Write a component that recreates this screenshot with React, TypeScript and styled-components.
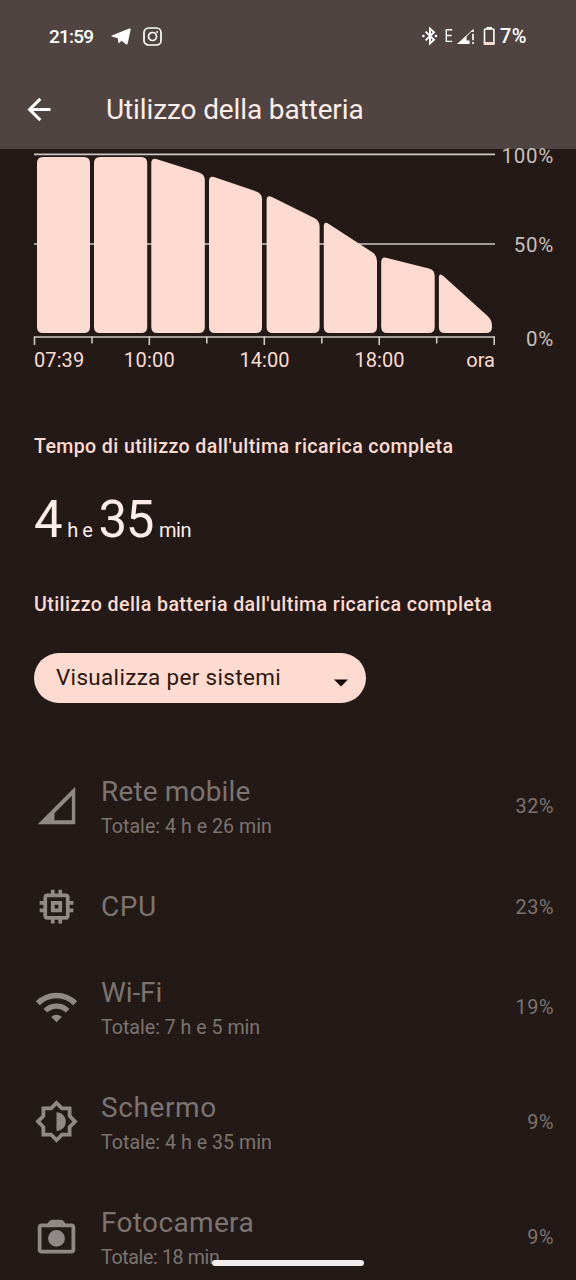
import React from "react";
import styled, { createGlobalStyle } from "styled-components";

const c = {
  bg: "#231a18",
  header: "#504442",
  peach: "#fedbd0",
  ink: "#2c1610",
  text: "#fdeeea",
  line: "#cdc6c3",
  scale: "#c9bfbc",
  dim: "#7d7370",
  dimIcon: "#918987",
};

const GlobalStyle = createGlobalStyle`
  * { box-sizing: border-box; }
  body { margin: 0; background: ${c.bg}; }
`;

const Screen = styled.div`
  position: relative;
  width: 576px;
  height: 1280px;
  overflow: hidden;
  background: ${c.bg};
  color: ${c.text};
  font-family: Roboto, "Open Sans", sans-serif;
  display: flex;
  flex-direction: column;
  white-space: nowrap;
`;

const Header = styled.header`
  height: 149px;
  flex: none;
  background: ${c.header};
`;

const StatusBar = styled.div`
  height: 72px;
  padding: 0 49px 0 49px;
  display: flex;
  align-items: center;
  justify-content: space-between;
  color: #fff;
  font-size: 19px;
  font-weight: 500;
`;

const StatusGroup = styled.div`
  display: flex;
  align-items: center;
`;

const Clock = styled.span`
  width: 62px;
  letter-spacing: -0.8px;
`;

const TelegramIcon = styled.svg`
  width: 20px;
  height: 17px;
`;

const InstagramIcon = styled.svg`
  width: 19px;
  height: 19px;
  margin-left: 12px;
`;

const SystemIcons = styled.svg`
  width: 78px;
  height: 22px;
`;

const BatteryLevel = styled.span`
  width: 27px;
  font-size: 20px;
  letter-spacing: 0.5px;
`;

const AppBar = styled.div`
  height: 77px;
  padding-left: 23px;
  display: flex;
  align-items: center;
  gap: 50px;
`;

const Title = styled.h1`
  margin: 0;
  padding-bottom: 2px;
  font-size: 28px;
  line-height: 36px;
  font-weight: 400;
  letter-spacing: -0.12px;
`;

const BackIcon = styled.svg`
  width: 33px;
  height: 33px;
  margin-bottom: 2px;
`;

const ChartSection = styled.section`
  height: 231px;
  flex: none;
  display: flex;
`;

const ChartColumn = styled.div`
  width: 496px;
`;

const Plot = styled.svg`
  display: block;
  width: 496px;
  height: 198px;
`;

const TimeAxis = styled.div`
  display: grid;
  grid-template-columns: 58px 115px 115px 115px 58px;
  margin-left: 34px;
  font-size: 20px;
  line-height: 26px;
  color: ${c.peach};
`;

const Tick = styled.span<{ $align?: string; $ls?: number }>`
  text-align: ${(p) => p.$align ?? "center"};
  letter-spacing: ${(p) => p.$ls ?? 0}px;
`;

const Scale = styled.div`
  width: 58px;
  margin-top: -6px;
  display: grid;
  grid-template-rows: 89px 94px 26px;
  justify-items: end;
  font-size: 20.5px;
  line-height: 26px;
  letter-spacing: 0.7px;
  color: ${c.scale};
`;

const Heading = styled.h2<{ $ls?: number }>`
  margin: 0;
  padding-left: 34px;
  font-size: 19.6px;
  line-height: 28px;
  font-weight: 500;
  color: ${c.peach};
  letter-spacing: ${(p) => p.$ls ?? 0}px;
`;

const Summary = styled.section`
  padding-top: 53px;
  flex: none;
  height: 368px;
`;

const Duration = styled.div`
  height: 130px;
  padding: 27px 0 0 34px;
  line-height: 64px;
  display: flex;
  align-items: baseline;
`;

const Big = styled.span`
  font-size: 51px;
  letter-spacing: -1.5px;
`;

const Unit = styled.span`
  font-size: 20px;
  letter-spacing: -0.4px;
  margin: 0 6px 0 6px;
`;

const Select = styled.button`
  margin: 34px 0 0 34px;
  width: 332px;
  height: 50px;
  padding: 0 17px 2px 22px;
  border: 0;
  border-radius: 25px;
  background: ${c.peach};
  color: ${c.ink};
  display: flex;
  align-items: center;
  justify-content: space-between;
  font-family: inherit;
  font-size: 22.4px;
  letter-spacing: 0.36px;
`;

const Caret = styled.svg`
  width: 16px;
  height: 8px;
  margin-top: 11px;
`;

const Row = styled.div<{ $compact?: boolean }>`
  height: ${(p) => (p.$compact ? 86 : 115)}px;
  flex: none;
  padding: 0 22px 0 34px;
  display: flex;
  align-items: center;
  color: ${c.dim};
`;

const RowIcon = styled.svg`
  width: 45px;
  height: 45px;
  margin-right: 22px;
  color: ${c.dimIcon};
`;

const RowText = styled.div<{ $compact?: boolean }>`
  flex: 1;
  padding-top: ${(p) => (p.$compact ? 0 : 5)}px;
`;

const RowName = styled.div<{ $ls?: number }>`
  font-size: 28px;
  line-height: 37px;
  letter-spacing: ${(p) => p.$ls ?? 0}px;
`;

const RowDetail = styled.div<{ $ls?: number }>`
  font-size: 19.6px;
  line-height: 33px;
  letter-spacing: ${(p) => p.$ls ?? 0}px;
`;

const RowValue = styled.div`
  padding-top: 2px;
  font-size: 19.8px;
  letter-spacing: 0.6px;
`;

const NavHandle = styled.div`
  position: absolute;
  left: 212px;
  bottom: 14px;
  width: 152px;
  height: 6px;
  border-radius: 3px;
  background: #f3eeed;
`;

type Pt = [number, number];

// Traces a closed polygon, replacing each corner by a quadratic curve.
function softPolygon(pts: Pt[], r: number) {
  const n = pts.length;
  const toward = (a: Pt, b: Pt): Pt => {
    const d = Math.hypot(b[0] - a[0], b[1] - a[1]);
    const t = Math.min(r, d / 2) / d;
    return [a[0] + (b[0] - a[0]) * t, a[1] + (b[1] - a[1]) * t];
  };
  return (
    pts
      .map((p, i) => {
        const s = toward(p, pts[(i + n - 1) % n]);
        const e = toward(p, pts[(i + 1) % n]);
        return `${i ? "L" : "M"}${s[0]} ${s[1]}Q${p[0]} ${p[1]} ${e[0]} ${e[1]}`;
      })
      .join("") + "Z"
  );
}

const bars = [
  [37, 90, 8, 8],
  [94, 147.2, 8, 8],
  [151.3, 204.8, 8.3, 25.4],
  [209, 262, 26.2, 44.4],
  [266.6, 319.6, 45.3, 71.7],
  [323.8, 377, 71.7, 106.2],
  [381.2, 434.7, 107.4, 121],
  [438.9, 492, 123, 171],
];

const ticks = [34.5, 92, 149.3, 206.8, 264.3, 321.8, 379.2, 436.7, 494.2];

const icons: Record<string, React.ReactNode> = {
  signal: <path fillRule="evenodd" d="M2 22 22 2V22ZM10.9 19.8H20.2V6.8L10.9 16.1Z" />,
  cpu: (
    <path
      fillRule="evenodd"
      d="M15 9H9v6h6V9zm-2 4h-2v-2h2v2zm8-2V9h-2V7c0-1.1-.9-2-2-2h-2V3h-2v2h-2V3H9v2H7c-1.1 0-2 .9-2 2v2H3v2h2v2H3v2h2v2c0 1.1.9 2 2 2h2v2h2v-2h2v2h2v-2h2c1.1 0 2-.9 2-2v-2h2v-2h-2v-2h2zm-4 6H7V7h10v10z"
    />
  ),
  wifi: (
    <>
      <g fill="none" stroke="currentColor">
        <path strokeWidth="3" d="M2.03 10.23A14.1 14.1 0 0 1 21.97 10.23" />
        <path strokeWidth="2.8" d="M6.06 14.26A8.4 8.4 0 0 1 17.94 14.26" />
      </g>
      <path d="M12 20.4 9.2 17.6A3.96 3.96 0 0 1 14.8 17.6Z" />
    </>
  ),
  display: (
    <path
      fillRule="evenodd"
      d="M20 15.31 23.31 12 20 8.69V4h-4.69L12 .69 8.69 4H4v4.69L.69 12 4 15.31V20h4.69L12 23.31 15.31 20H20v-4.69zm-2-.82V18h-3.51L12 20.49 9.51 18H6v-3.51L3.51 12 6 9.51V6h3.51L12 3.51 14.49 6H18v3.51L20.49 12 18 14.49zM12 7v10c2.76 0 5-2.24 5-5s-2.24-5-5-5z"
    />
  ),
  camera: (
    <path
      fillRule="evenodd"
      d="M20 5h-3.17L15.6 3.6C15.2 3.2 14.7 3 14.1 3H9.9c-.6 0-1.1.2-1.5.6L7.17 5H4c-1.1 0-2 .9-2 2v12c0 1.1.9 2 2 2h16c1.1 0 2-.9 2-2V7c0-1.1-.9-2-2-2zm0 14H4V7h16v12zM12 8.5a4.5 4.5 0 1 0 0 9 4.5 4.5 0 1 0 0-9z"
    />
  ),
};

const rows = [
  { icon: "signal", name: "Rete mobile", detail: "Totale: 4 h e 26 min", value: "32%", ls: 0.15, dls: 0.03 },
  { icon: "cpu", name: "CPU", value: "23%", ls: 0.5 },
  { icon: "wifi", name: "Wi-Fi", detail: "Totale: 7 h e 5 min", value: "19%", ls: -0.1, dls: 0 },
  { icon: "display", name: "Schermo", detail: "Totale: 4 h e 35 min", value: "9%", ls: 0.6, dls: 0.03 },
  { icon: "camera", name: "Fotocamera", detail: "Totale: 18 min", value: "9%", ls: 0.35, dls: -0.35 },
];

function BatteryChart() {
  return (
    <Plot viewBox="0 0 496 198">
      <g stroke={c.line} strokeWidth="1.6" fill="none">
        <path d="M34 5.4H495M34 95H495M34 188H495" />
        {ticks.map((x, i) => (
          <path key={x} d={`M${x} 187.4V${i % 2 ? 194.5 : 196}`} />
        ))}
      </g>
      {bars.map(([l, r, tl, tr]) => (
        <path key={l} fill={c.peach} d={softPolygon([[l, tl], [r, tr], [r, 184], [l, 184]], 6)} />
      ))}
    </Plot>
  );
}

export default function App() {
  return (
    <Screen>
      <GlobalStyle />
      <Header>
        <StatusBar>
          <StatusGroup>
            <Clock>21:59</Clock>
            <TelegramIcon viewBox="0 0 20 17" fill="#fff">
              <path d="M.8 7.5 18.3.5c.9-.3 1.5.1 1.3 1.2L16.8 15.3c-.2 1.1-.9 1.4-1.8.9L10.5 12.8 8.3 15c-.3.3-.7.3-.8-.2L6.7 10.2 1 8.5C.2 8.3.1 7.8.8 7.5Z" />
            </TelegramIcon>
            <InstagramIcon viewBox="0 0 19 19" fill="none" stroke="#fff" strokeWidth="1.7">
              <rect x="1" y="1" width="17" height="17" rx="4.6" />
              <circle cx="9.5" cy="9.5" r="4" />
              <circle cx="14.1" cy="4.9" r="1" fill="#fff" stroke="none" />
            </InstagramIcon>
          </StatusGroup>
          <StatusGroup>
            <SystemIcons viewBox="0 0 78 22" fill="none" stroke="#fff">
              <path strokeWidth="1.9" d="M3.6 6.6 12 14.8 8 18.4V3.6L12 7.2 3.6 15.4" />
              <circle cx="1.4" cy="11" r="1.3" fill="#fff" stroke="none" />
              <circle cx="14" cy="11" r="1.3" fill="#fff" stroke="none" />
              <path strokeWidth="1.4" d="M30.2 4.8H24.3V16.4H30.2M24.3 10.5H29.6" />
              <path fill="#fff" stroke="none" d="M35 19 51.7 3.7V7H49L44.6 11.4V15.5H47.6V19Z" />
              <path strokeWidth="1.6" d="M51 8.8V15.2M51 17V19" />
              <rect x="62.5" y="4" width="9.4" height="15.2" rx="1" strokeWidth="1.6" />
              <path strokeWidth="2" d="M64.6 2.9H69.8" />
              <path stroke={c.peach} strokeWidth="2.8" d="M61.7 18.4H72.7" />
            </SystemIcons>
            <BatteryLevel>7%</BatteryLevel>
          </StatusGroup>
        </StatusBar>
        <AppBar>
          <BackIcon viewBox="0 0 24 24" fill="none" stroke="#fff" strokeWidth="2.2">
            <path d="M20 12H5M12.6 4.3 4.8 12 12.6 19.7" />
          </BackIcon>
          <Title>Utilizzo della batteria</Title>
        </AppBar>
      </Header>

      <ChartSection>
        <ChartColumn>
          <BatteryChart />
          <TimeAxis>
            <Tick $align="left" $ls={0.1}>07:39</Tick>
            <Tick $ls={0.3}>10:00</Tick>
            <Tick>14:00</Tick>
            <Tick>18:00</Tick>
            <Tick $align="right">ora</Tick>
          </TimeAxis>
        </ChartColumn>
        <Scale>
          <span>100%</span>
          <span>50%</span>
          <span>0%</span>
        </Scale>
      </ChartSection>

      <Summary>
        <Heading $ls={0.38}>Tempo di utilizzo dall'ultima ricarica completa</Heading>
        <Duration>
          <Big>4</Big>
          <Unit>h e</Unit>
          <Big>35</Big>
          <Unit>min</Unit>
        </Duration>
        <Heading $ls={0.41}>Utilizzo della batteria dall'ultima ricarica completa</Heading>
        <Select>
          <span>Visualizza per sistemi</span>
          <Caret viewBox="0 0 16 8">
            <path d="M1 .5H15L8 7.5Z" fill="#120705" />
          </Caret>
        </Select>
      </Summary>

      {rows.map((r) => (
        <Row key={r.name} $compact={!r.detail}>
          <RowIcon viewBox="0 0 24 24" fill="currentColor">
            {icons[r.icon]}
          </RowIcon>
          <RowText $compact={!r.detail}>
            <RowName $ls={r.ls}>{r.name}</RowName>
            {r.detail && <RowDetail $ls={r.dls}>{r.detail}</RowDetail>}
          </RowText>
          <RowValue>{r.value}</RowValue>
        </Row>
      ))}
      <NavHandle />
    </Screen>
  );
}
